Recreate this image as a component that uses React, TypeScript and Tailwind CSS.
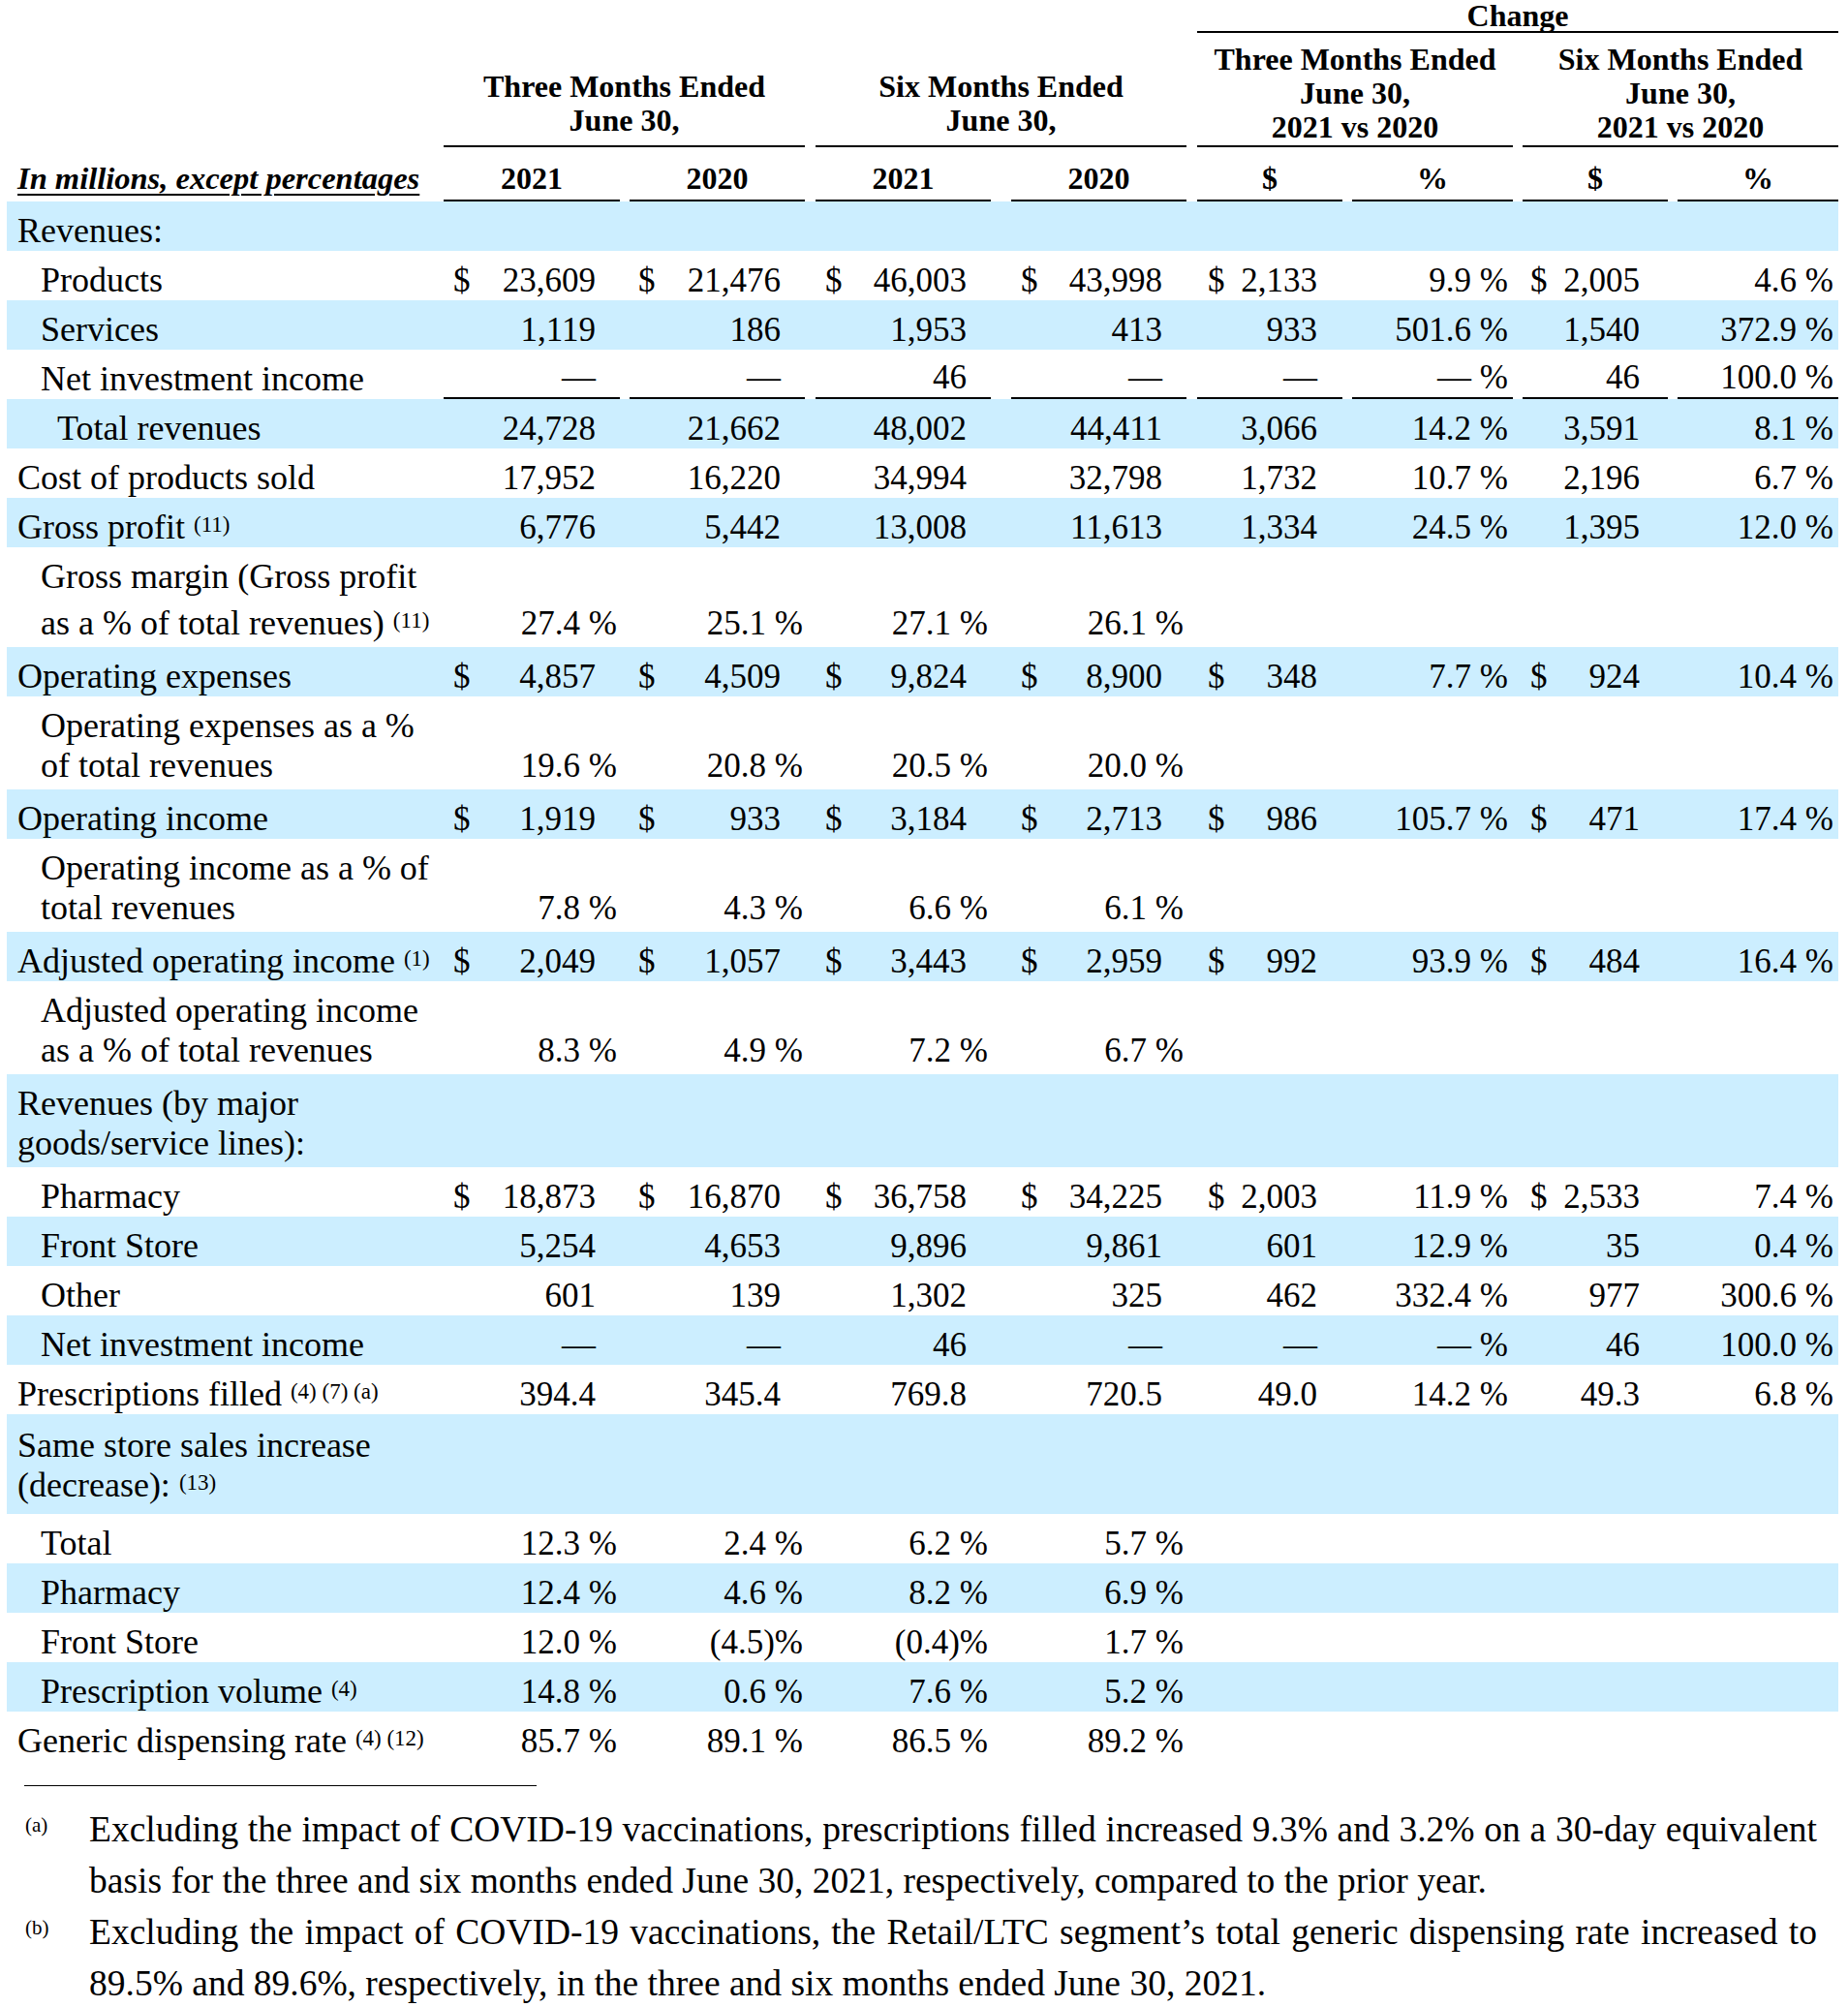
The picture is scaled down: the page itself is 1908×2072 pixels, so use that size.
type Kind = 'single' | 'double' | 'supDouble' | 'tall';

interface Line {
  text: string;
  sup?: string;
}

interface RowData {
  lines: (string | Line)[];
  level: 0 | 1 | 2;
  blue?: boolean;
  kind?: Kind;
  rule?: boolean;
  values?: string[];
}

// one entry per numeric column: trailing gap, "$" inset, number / percent right padding
const COLS = [
  { cell: 'pr-[10px]', dollar: 'pl-[10px]', num: 'pr-[25px]', pct: 'pr-[3px]' },
  { cell: 'pr-[11px]', dollar: 'pl-[9px]', num: 'pr-[25px]', pct: 'pr-[2px]' },
  { cell: 'pr-[21px]', dollar: 'pl-[10px]', num: 'pr-[25px]', pct: 'pr-[3px]' },
  { cell: 'pr-[11px]', dollar: 'pl-[10px]', num: 'pr-[25px]', pct: 'pr-[3px]' },
  { cell: 'pr-[10px]', dollar: 'pl-[11px]', num: 'pr-[26px]', pct: 'pr-[5px]' },
  { cell: 'pr-[10px]', dollar: 'pl-[10px]', num: 'pr-[5px]', pct: 'pr-[5px]' },
  { cell: 'pr-[10px]', dollar: 'pl-[8px]', num: 'pr-[29px]', pct: 'pr-[5px]' },
  { cell: '', dollar: 'pl-[10px]', num: 'pr-[5px]', pct: 'pr-[5px]' },
];

const GRID = 'grid grid-cols-[451px_192px_192px_202px_192px_160px_176px_160px_166px]';

const INDENT = ['pl-[11px]', 'pl-[35px]', 'pl-[52px]'];

const LABEL_PAD: Record<Kind, string> = {
  single: 'pt-[10px]',
  double: 'pt-[10px] pb-[4px]',
  supDouble: 'pt-[10px] pb-[4px]',
  tall: 'pt-[12px] pb-[9px]',
};

const VALUE_PB: Record<Kind, string> = {
  single: '',
  double: 'pb-[4px]',
  supDouble: 'pb-[4px]',
  tall: 'pb-[9px]',
};

const ROWS: RowData[] = [
  { lines: ['Revenues:'], level: 0, blue: true },
  {
    lines: ['Products'],
    level: 1,
    values: ['$23,609', '$21,476', '$46,003', '$43,998', '$2,133', '9.9 %', '$2,005', '4.6 %'],
  },
  {
    lines: ['Services'],
    level: 1,
    blue: true,
    values: ['1,119', '186', '1,953', '413', '933', '501.6 %', '1,540', '372.9 %'],
  },
  {
    lines: ['Net investment income'],
    level: 1,
    rule: true,
    values: ['—', '—', '46', '—', '—', '— %', '46', '100.0 %'],
  },
  {
    lines: ['Total revenues'],
    level: 2,
    blue: true,
    values: ['24,728', '21,662', '48,002', '44,411', '3,066', '14.2 %', '3,591', '8.1 %'],
  },
  {
    lines: ['Cost of products sold'],
    level: 0,
    values: ['17,952', '16,220', '34,994', '32,798', '1,732', '10.7 %', '2,196', '6.7 %'],
  },
  {
    lines: [{ text: 'Gross profit', sup: '(11)' }],
    level: 0,
    blue: true,
    values: ['6,776', '5,442', '13,008', '11,613', '1,334', '24.5 %', '1,395', '12.0 %'],
  },
  {
    lines: ['Gross margin (Gross profit', { text: 'as a % of total revenues)', sup: '(11)' }],
    level: 1,
    kind: 'supDouble',
    values: ['27.4 %', '25.1 %', '27.1 %', '26.1 %'],
  },
  {
    lines: ['Operating expenses'],
    level: 0,
    blue: true,
    values: ['$4,857', '$4,509', '$9,824', '$8,900', '$348', '7.7 %', '$924', '10.4 %'],
  },
  {
    lines: ['Operating expenses as a %', 'of total revenues'],
    level: 1,
    kind: 'double',
    values: ['19.6 %', '20.8 %', '20.5 %', '20.0 %'],
  },
  {
    lines: ['Operating income'],
    level: 0,
    blue: true,
    values: ['$1,919', '$933', '$3,184', '$2,713', '$986', '105.7 %', '$471', '17.4 %'],
  },
  {
    lines: ['Operating income as a % of', 'total revenues'],
    level: 1,
    kind: 'double',
    values: ['7.8 %', '4.3 %', '6.6 %', '6.1 %'],
  },
  {
    lines: [{ text: 'Adjusted operating income', sup: '(1)' }],
    level: 0,
    blue: true,
    values: ['$2,049', '$1,057', '$3,443', '$2,959', '$992', '93.9 %', '$484', '16.4 %'],
  },
  {
    lines: ['Adjusted operating income', 'as a % of total revenues'],
    level: 1,
    kind: 'double',
    values: ['8.3 %', '4.9 %', '7.2 %', '6.7 %'],
  },
  {
    lines: ['Revenues (by major', 'goods/service lines):'],
    level: 0,
    blue: true,
    kind: 'double',
  },
  {
    lines: ['Pharmacy'],
    level: 1,
    values: ['$18,873', '$16,870', '$36,758', '$34,225', '$2,003', '11.9 %', '$2,533', '7.4 %'],
  },
  {
    lines: ['Front Store'],
    level: 1,
    blue: true,
    values: ['5,254', '4,653', '9,896', '9,861', '601', '12.9 %', '35', '0.4 %'],
  },
  {
    lines: ['Other'],
    level: 1,
    values: ['601', '139', '1,302', '325', '462', '332.4 %', '977', '300.6 %'],
  },
  {
    lines: ['Net investment income'],
    level: 1,
    blue: true,
    values: ['—', '—', '46', '—', '—', '— %', '46', '100.0 %'],
  },
  {
    lines: [{ text: 'Prescriptions filled', sup: '(4) (7) (a)' }],
    level: 0,
    values: ['394.4', '345.4', '769.8', '720.5', '49.0', '14.2 %', '49.3', '6.8 %'],
  },
  {
    lines: ['Same store sales increase', { text: '(decrease):', sup: '(13)' }],
    level: 0,
    blue: true,
    kind: 'tall',
  },
  { lines: ['Total'], level: 1, values: ['12.3 %', '2.4 %', '6.2 %', '5.7 %'] },
  { lines: ['Pharmacy'], level: 1, blue: true, values: ['12.4 %', '4.6 %', '8.2 %', '6.9 %'] },
  { lines: ['Front Store'], level: 1, values: ['12.0 %', '(4.5)%', '(0.4)%', '1.7 %'] },
  {
    lines: [{ text: 'Prescription volume', sup: '(4)' }],
    level: 1,
    blue: true,
    values: ['14.8 %', '0.6 %', '7.6 %', '5.2 %'],
  },
  {
    lines: [{ text: 'Generic dispensing rate', sup: '(4) (12)' }],
    level: 0,
    values: ['85.7 %', '89.1 %', '86.5 %', '89.2 %'],
  },
];

function LabelLine({ line, last, kind }: { line: string | Line; last: boolean; kind: Kind }) {
  const l = typeof line === 'string' ? { text: line } : line;
  // the superscript on the second line of "Gross margin" pushes that line down a little
  const push = last && kind === 'supDouble' ? 'pt-[7px]' : '';
  return (
    <div className={`whitespace-nowrap leading-[41px] ${push}`}>
      {l.text}
      {l.sup && (
        <>
          {' '}
          <span className="relative -top-[7px] text-[23px] leading-none">{l.sup}</span>
        </>
      )}
    </div>
  );
}

function ValueCell({ value, col }: { value?: string; col: (typeof COLS)[number] }) {
  if (!value) return null;
  if (value.startsWith('$')) {
    return (
      <>
        <span className={col.dollar}>$</span>
        <span className={`ml-auto ${col.num}`}>{value.slice(1)}</span>
      </>
    );
  }
  const isPct = value.endsWith('%');
  return (
    <span className={`ml-auto ${isPct ? col.pct : col.num}`}>
      {isPct ? value.replace(' %', '\u00a0%') : value}
    </span>
  );
}

function TableRow({ row }: { row: RowData }) {
  const kind = row.kind ?? 'single';

  return (
    <div className={`${GRID} ${row.blue ? 'bg-[#cceeff]' : ''}`}>
      <div className={`text-[36px] ${INDENT[row.level]} ${LABEL_PAD[kind]}`}>
        {row.lines.map((line, i) => (
          <LabelLine key={i} line={line} last={i === row.lines.length - 1} kind={kind} />
        ))}
      </div>
      {COLS.map((col, i) => (
        <div key={i} className={col.cell}>
          <div
            className={`flex h-full items-end whitespace-nowrap leading-[41px] ${VALUE_PB[kind]} ${
              row.rule ? 'border-b-2 border-black' : ''
            }`}
          >
            <ValueCell value={row.values?.[i]} col={col} />
          </div>
        </div>
      ))}
    </div>
  );
}

function Header() {
  return (
    <div className="text-[32px] font-bold">
      {/* Change */}
      <div className={`${GRID} h-[34px]`}>
        <div className="col-[6/10]">
          <div className="border-b-2 border-black text-center leading-[32px]">Change</div>
        </div>
      </div>

      {/* period groups */}
      <div className={`${GRID} h-[118px] leading-[35px]`}>
        <div className="col-[2/4] pr-[11px]">
          <div className="flex h-full flex-col items-center justify-end border-b-2 border-black pb-[8px]">
            <div>Three Months Ended</div>
            <div>June 30,</div>
          </div>
        </div>
        <div className="col-[4/6] pr-[11px]">
          <div className="flex h-full flex-col items-center justify-end border-b-2 border-black pb-[8px]">
            <div>Six Months Ended</div>
            <div>June 30,</div>
          </div>
        </div>
        <div className="col-[6/8] pr-[10px]">
          <div className="flex h-full flex-col items-center justify-end border-b-2 border-black pb-[1px]">
            <div>Three Months Ended</div>
            <div>June 30,</div>
            <div>2021 vs 2020</div>
          </div>
        </div>
        <div className="col-[8/10]">
          <div className="flex h-full flex-col items-center justify-end border-b-2 border-black pb-[1px]">
            <div>Six Months Ended</div>
            <div>June 30,</div>
            <div>2021 vs 2020</div>
          </div>
        </div>
      </div>

      {/* years */}
      <div className={`${GRID} h-[56px] leading-[35px]`}>
        <div className="flex items-end pb-[6px] pl-[11px]">
          <span className="whitespace-nowrap text-[32.5px] italic underline decoration-2 underline-offset-[5px]">
            In millions, except percentages
          </span>
        </div>
        {['2021', '2020', '2021', '2020', '$', '%', '$', '%'].map((h, i) => (
          <div key={i} className={COLS[i].cell}>
            <div className="flex h-full items-end justify-center border-b-2 border-black pb-[4px]">
              {h}
            </div>
          </div>
        ))}
      </div>
    </div>
  );
}

function Footnote({ mark, first, rest }: { mark: string; first: string; rest: string }) {
  return (
    <div className="flex">
      <div className="w-[66px] text-[21px] leading-[44px]">{mark}</div>
      <div className="w-[1784px] text-[37.5px] leading-[53px]">
        <div className="whitespace-nowrap text-justify [text-align-last:justify]">{first}</div>
        <div className="whitespace-nowrap">{rest}</div>
      </div>
    </div>
  );
}

export default function App() {
  return (
    <div className="min-h-screen bg-white font-['Liberation_Serif','Times_New_Roman',serif] text-[35px] text-black">
      <div className="ml-[7px] w-[1891px]">
        <Header />
        {ROWS.map((row, i) => (
          <TableRow key={i} row={row} />
        ))}
      </div>

      <div className="ml-[25px] mt-[25px] h-px w-[529px] bg-black" />

      <div className="mt-[18px] pl-[26px]">
        <Footnote
          mark="(a)"
          first="Excluding the impact of COVID-19 vaccinations, prescriptions filled increased 9.3% and 3.2% on a 30-day equivalent"
          rest="basis for the three and six months ended June 30, 2021, respectively, compared to the prior year."
        />
        <Footnote
          mark="(b)"
          first="Excluding the impact of COVID-19 vaccinations, the Retail/LTC segment’s total generic dispensing rate increased to"
          rest="89.5% and 89.6%, respectively, in the three and six months ended June 30, 2021."
        />
      </div>
    </div>
  );
}
